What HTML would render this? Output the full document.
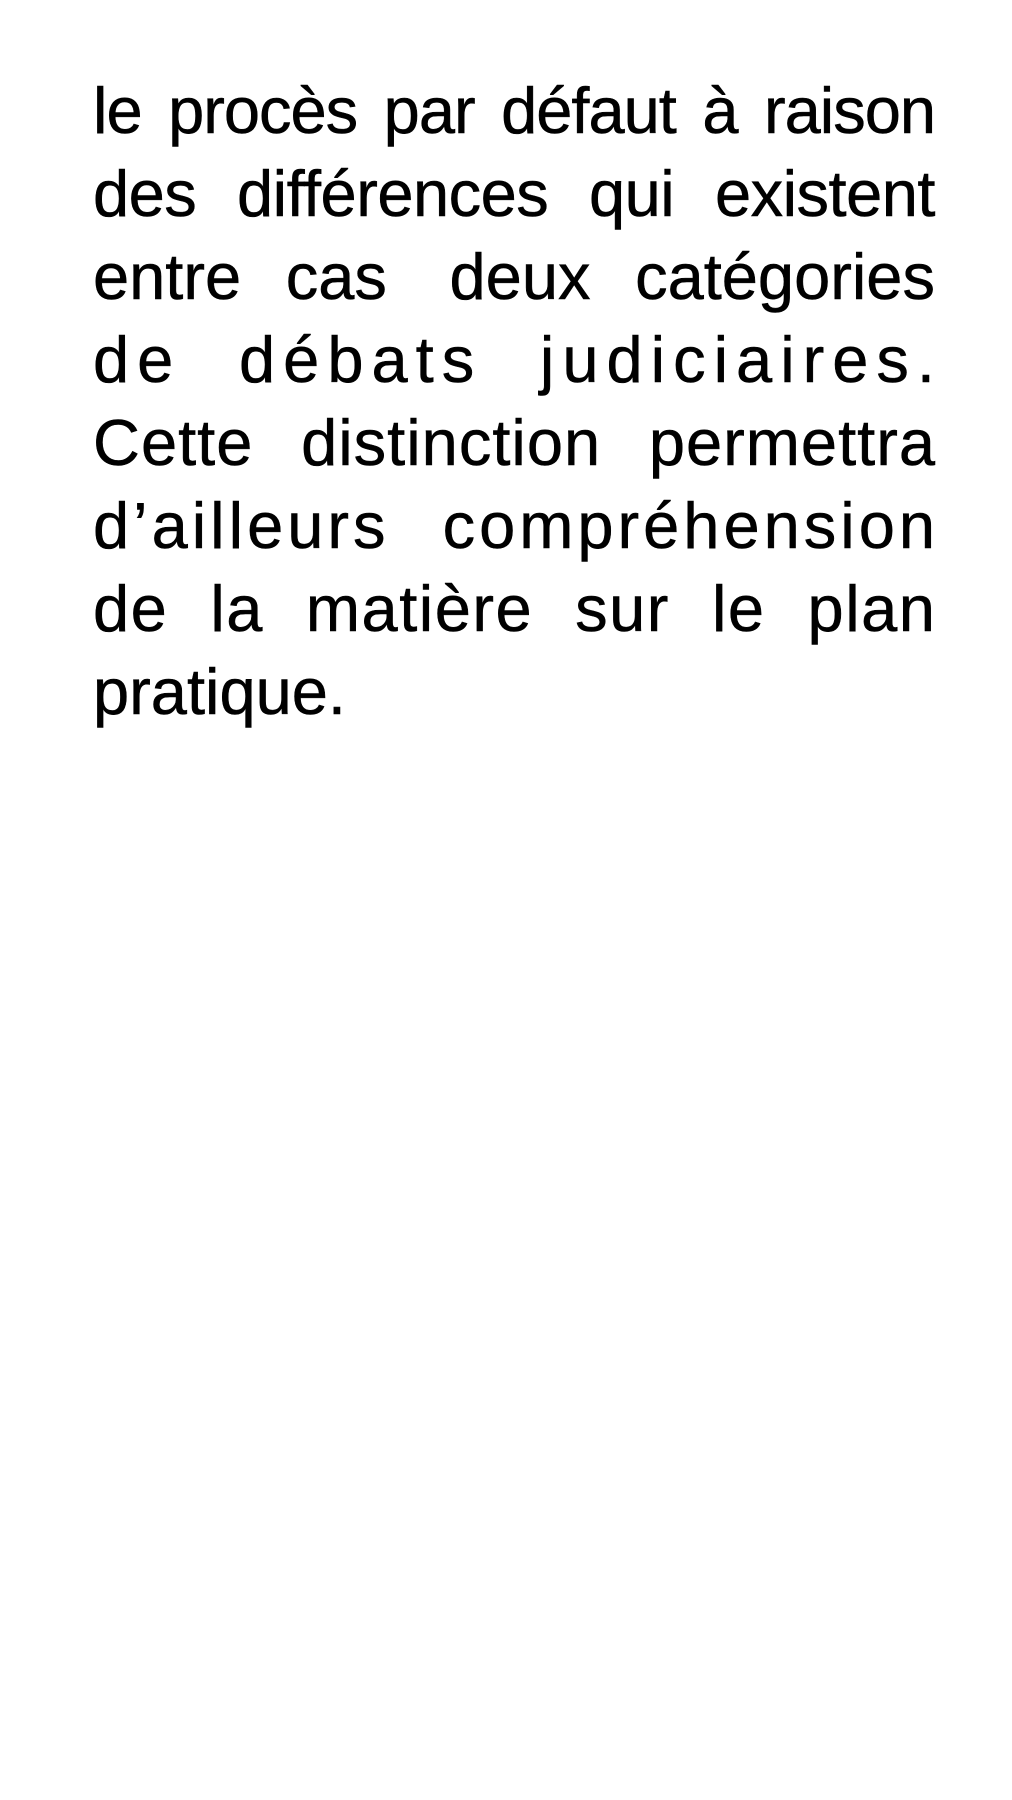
<!DOCTYPE html>
<html><head><meta charset="utf-8"><style>
html,body{margin:0;padding:0;background:#fff;width:1012px;height:1800px;overflow:hidden}
.t{position:absolute;left:93px;top:69px;width:842px}
.l{width:842px;font-family:"Liberation Sans",sans-serif;font-size:65px;line-height:83px;height:83px;color:#000;white-space:nowrap;display:flex;justify-content:space-between;-webkit-text-stroke:0.5px #000}
.l.last{justify-content:flex-start}
</style></head><body>
<div class="t">
<div class="l" style="letter-spacing:-1px"><span>le</span><span>procès</span><span>par</span><span>défaut</span><span>à</span><span>raison</span></div>
<div class="l" style="letter-spacing:-0.5px"><span>des</span><span>différences</span><span>qui</span><span>existent</span></div>
<div class="l"><span>entre</span><span>cas&nbsp;</span><span>deux</span><span>catégories</span></div>
<div class="l" style="letter-spacing:8px"><span>de</span><span>débats</span><span style="margin-right:-8px">judiciaires.</span></div>
<div class="l" style="letter-spacing:1px"><span>Cette</span><span>distinction</span><span style="margin-right:-1px">permettra</span></div>
<div class="l" style="letter-spacing:4px"><span>d’ailleurs</span><span style="margin-right:-4px">compréhension</span></div>
<div class="l" style="letter-spacing:1.5px"><span>de</span><span>la</span><span>matière</span><span>sur</span><span>le</span><span style="margin-right:-1.5px">plan</span></div>
<div class="l last"><span>pratique.</span></div>
</div>
</body></html>
